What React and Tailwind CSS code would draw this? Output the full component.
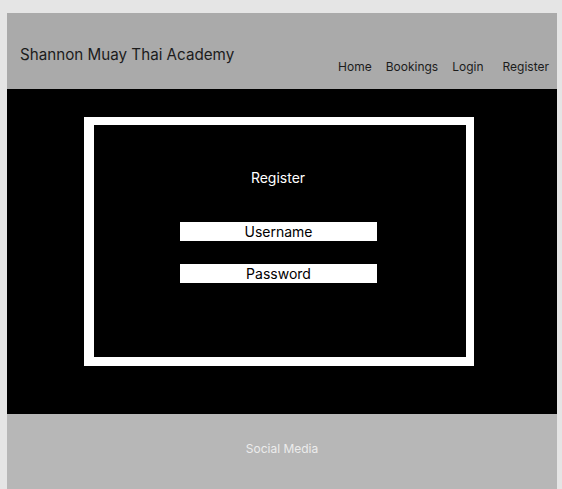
const Header = () => (
  <header className="h-[76px] bg-[#aaaaaa] flex justify-between text-[#1c1c1c]">
    <h1 className="pl-[13px] pt-[32px] text-[15.2px] leading-[19px] font-normal">
      Shannon Muay Thai Academy
    </h1>
    <nav className="flex pt-[46px] pr-[8px] text-[12px] leading-[15px]">
      <a className="mr-[14px]">Home</a>
      <a className="mr-[14px]">Bookings</a>
      <a className="mr-[19px]">Login</a>
      <a>Register</a>
    </nav>
  </header>
);

const RegisterCard = () => (
  <div className="ml-[77px] pt-[28px]">
    <div className="w-[390px] h-[249px] border-white border-l-[10px] border-t-[8px] border-r-[8px] border-b-[9px] bg-black">
      <p className="pt-[44px] text-center text-white text-[14px] leading-[18px] pr-[4px]">
        Register
      </p>
      <div className="mt-[35px] ml-[86px] w-[197px] flex flex-col gap-[23px]">
        <div className="h-[19px] bg-white text-black text-center text-[14px] leading-[19px]">
          Username
        </div>
        <div className="h-[19px] bg-white text-black text-center text-[14px] leading-[19px]">
          Password
        </div>
      </div>
    </div>
  </div>
);

export default function App() {
  return (
    <div
      className="w-[562px] h-[489px] overflow-hidden bg-[#e5e5e5] pt-[13px] pl-[7px]"
      style={{ fontFamily: "Inter, 'Noto Sans', sans-serif" }}
    >
      <div className="w-[550px]">
        <Header />
        <main className="h-[325px] bg-black">
          <RegisterCard />
        </main>
        <footer className="h-[80px] bg-[#b7b7b7] flex justify-center pt-[27px]">
          <span className="text-[12px] leading-[15px] text-[#ececec]">Social Media</span>
        </footer>
      </div>
    </div>
  );
}
